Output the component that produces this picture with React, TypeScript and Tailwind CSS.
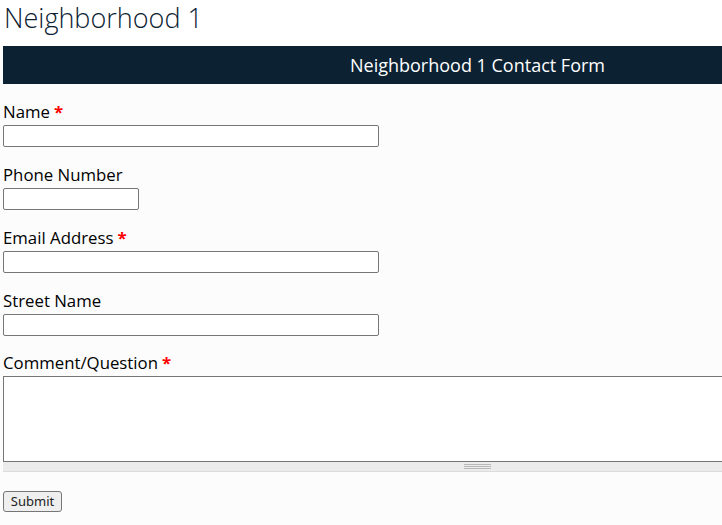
import React from "react";

const font = { fontFamily: "'Open Sans', 'Noto Sans', sans-serif" } as React.CSSProperties;

function Label({ text, req }: { text: string; req?: boolean }) {
  return (
    <div className="h-[20px] text-[16.8px] leading-[20px] text-black -mt-[3px] mb-[3px]" style={font}>
      {text}
      {req && <span className="text-[#ff0000] ml-[4px] font-bold">*</span>}
    </div>
  );
}

export default function App() {
  return (
    <div className="w-[722px] h-[525px] overflow-hidden bg-[#fcfcfc]" style={font}>
      <div className="w-[952px] pl-[3px]">
        <div className="h-[46px] bg-white -ml-[3px] pl-[4px] pt-[0px]">
          <div className="text-[27px] leading-[36px] font-light text-[#0c2233]" style={font}>Neighborhood 1</div>
        </div>
        <div className="h-[38px] bg-[#0c2233] w-[949px] flex items-center justify-center text-white text-[18px]">
          Neighborhood 1 Contact Form
        </div>
        <div className="flex flex-col">
          <div className="mt-[21px]"><Label text="Name" req /></div>
          <input className="w-[376px] h-[22px] border border-[#767676] bg-white rounded-[2px]" />
          <div className="mt-[21px]"><Label text="Phone Number" /></div>
          <input className="w-[136px] h-[22px] border border-[#767676] bg-white rounded-[2px]" />
          <div className="mt-[21px]"><Label text="Email Address" req /></div>
          <input className="w-[376px] h-[22px] border border-[#767676] bg-white rounded-[2px]" />
          <div className="mt-[21px]"><Label text="Street Name" /></div>
          <input className="w-[376px] h-[22px] border border-[#767676] bg-white rounded-[2px]" />
          <div className="mt-[20px]"><Label text="Comment/Question" req /></div>
          <div className="w-[948px]">
            <div className="h-[86px] border border-[#767676] bg-white" />
            <div className="h-[10px] bg-[#ececec] border-b border-[#dcdcdc] flex justify-center items-center">
              <div className="w-[27px] flex flex-col gap-[1px]">
                <div className="h-px bg-[#b8b8b8]" />
                <div className="h-px bg-[#b8b8b8]" />
                <div className="h-px bg-[#b8b8b8]" />
              </div>
            </div>
          </div>
          <div className="mt-[16px]">
            <button
              className="h-[21px] w-[59px] border border-[#767676] rounded-[3px] bg-[#efefef] text-[13px] leading-[19px] text-[#222]"
              style={{ fontFamily: "'Noto Sans', 'DejaVu Sans', sans-serif" }}
            >
              Submit
            </button>
          </div>
        </div>
      </div>
    </div>
  );
}
